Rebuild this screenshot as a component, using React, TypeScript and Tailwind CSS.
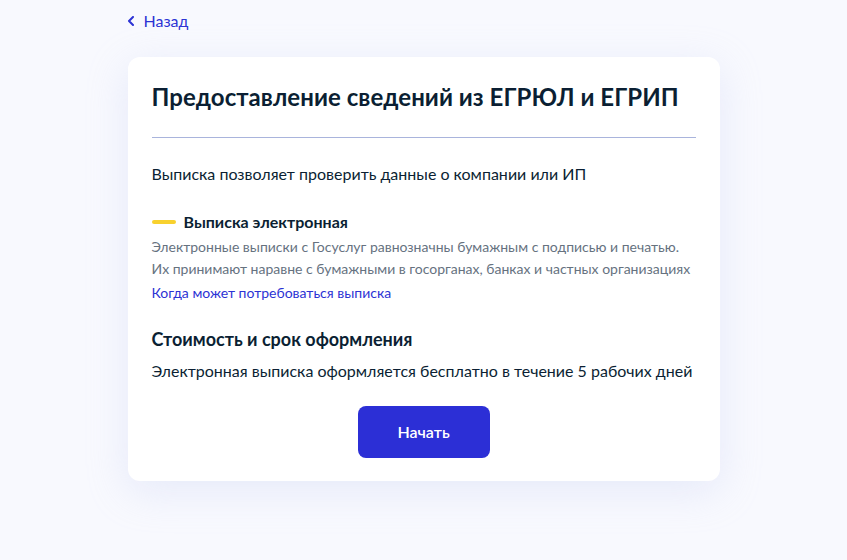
export default function App() {
  return (
    <div
      className="min-h-screen bg-[#f8f9fe] text-[#0b1f33]"
      style={{ fontFamily: "Lato, 'Noto Sans', sans-serif" }}
    >
      <div className="mx-auto w-[592px] pt-[9px] pb-10">
        <a href="#" className="-ml-[1px] flex h-6 items-center gap-[9px] text-[16px] text-[#2c33d4]">
          <svg width="8" height="10" viewBox="0 0 8 10" fill="none">
            <path d="M6 1L2 5l4 4" stroke="currentColor" strokeWidth="2" strokeLinecap="round" strokeLinejoin="round" />
          </svg>
          <span>Назад</span>
        </a>

        <div className="mt-6 rounded-xl bg-white px-6 pt-6 pb-[23px] shadow-[0_10px_40px_rgba(190,200,240,0.3)]">
          <h1 className="text-[24px] leading-8 font-bold tracking-[0.05px]">
            Предоставление сведений из ЕГРЮЛ и ЕГРИП
          </h1>
          <div className="mt-6 h-px bg-[#a9b4dc]" />

          <p className="mt-6 text-[16px] leading-6">
            Выписка позволяет проверить данные о компании или ИП
          </p>

          <div className="mt-6 flex items-center gap-2">
            <span className="h-1 w-6 rounded-sm bg-[#f8d12e]" />
            <h3 className="text-[16px] leading-6 font-bold">Выписка электронная</h3>
          </div>
          <p className="mt-[2px] text-[14px] leading-[22px] text-[#66727f]">
            Электронные выписки с Госуслуг равнозначны бумажным с подписью и печатью.
            <br />
            Их принимают наравне с бумажными в госорганах, банках и частных организациях
          </p>
          <a href="#" className="mt-[3px] block text-[14px] leading-5 text-[#2c33d4]">
            Когда может потребоваться выписка
          </a>

          <h2 className="mt-6 text-[18px] leading-6 font-bold">Стоимость и срок оформления</h2>
          <p className="mt-2 text-[16px] leading-6">
            Электронная выписка оформляется бесплатно в течение 5 рабочих дней
          </p>

          <div className="mt-[23px] flex justify-center">
            <button className="h-[52px] w-[132px] rounded-lg bg-[#2c2fd6] text-[16px] font-semibold text-white">
              Начать
            </button>
          </div>
        </div>
      </div>
    </div>
  );
}
